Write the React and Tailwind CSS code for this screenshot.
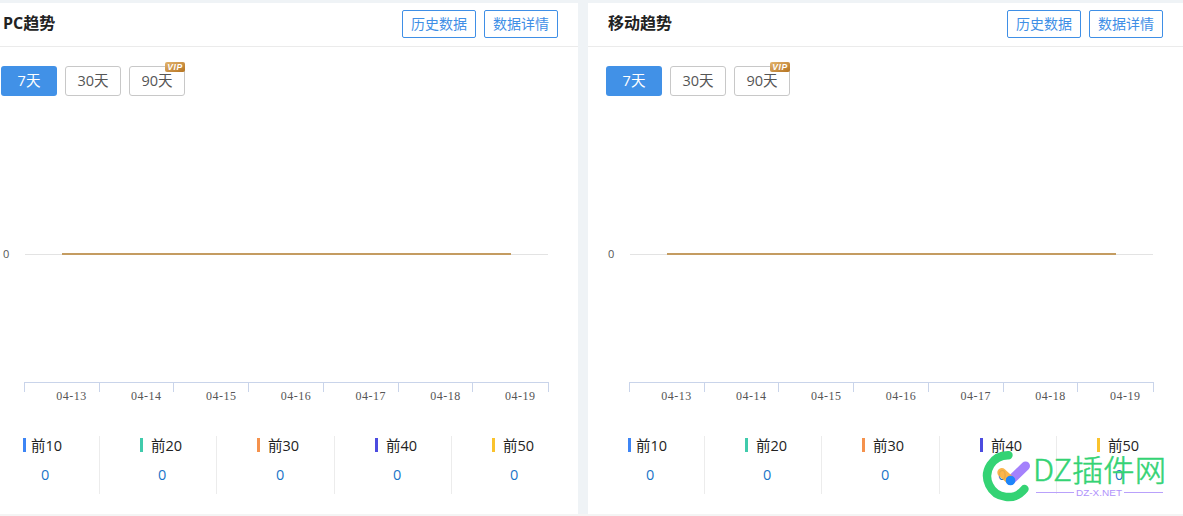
import React, { useState } from 'react';

const dates = ['04-13', '04-14', '04-15', '04-16', '04-17', '04-18', '04-19'];
const ticks = [24, 99, 173, 248, 323, 398, 472, 548];

const ranks = [
    { label: '前10', value: 0, col: 'w-[100px] pl-[23px] border-r', bar: 'bg-[#3d85f5] mr-[5px]', num: 'pl-[18px]' },
    { label: '前20', value: 0, col: 'w-[117px] pl-[40px] border-r', bar: 'bg-[#40cbac] mr-[8px]', num: 'pl-[18px]' },
    { label: '前30', value: 0, col: 'w-[118px] pl-[40px] border-r', bar: 'bg-[#f5924d] mr-[8px]', num: 'pl-[19px]' },
    { label: '前40', value: 0, col: 'w-[117px] pl-[40px] border-r', bar: 'bg-[#4c4ce0] mr-[8px]', num: 'pl-[18px]' },
    { label: '前50', value: 0, col: 'w-[117px] pl-[40px]', bar: 'bg-[#fac32d] mr-[8px]', num: 'pl-[18px]' },
];

const HeaderButton = ({ children }) => (
    <button className="w-[74px] h-7 rounded-[2px] border border-[#3f8fe6] text-sm leading-[26px] text-[#3f8fe6] whitespace-nowrap">
        {children}
    </button>
);

const DayTab = ({ label, active, vip, onClick }) => (
    <button
        className={
            active
                ? 'relative w-14 h-[30px] rounded-[3px] text-[14.5px] leading-[30px] bg-[#4191e7] text-white'
                : 'relative w-14 h-[30px] rounded-[3px] text-[14.5px] leading-[28px] border border-[#c8c8c8] text-[#555]'
        }
        onClick={onClick}
    >
        {label}
        {vip && (
            <span className="absolute -top-[5px] -right-px flex items-center justify-center w-5 h-[10px] rounded-[2px] bg-linear-to-br from-[#e3b46c] to-[#b5731c] font-['Liberation_Sans'] text-[8.5px] leading-[10px] font-bold italic tracking-[0.6px] text-white">
                VIP
            </span>
        )}
    </button>
);

const TrendChart = () => (
    <svg width="578" height="320" viewBox="0 96 578 320" className="block">
        <text x="3" y="258" fontSize="11" fill="#555" fontFamily="Open Sans, sans-serif">0</text>
        <path d="M25 254.5H548" stroke="#e3e3e3" />
        <path d="M62 254H511" stroke="#c49c61" strokeWidth="2" />
        <path d="M24 382.5H549" stroke="#c9d4ea" />
        {ticks.map((x) => (
            <path key={x} d={`M${x + 0.5} 382V392`} stroke="#c9d4ea" />
        ))}
        {dates.map((date, i) => (
            <text
                key={date}
                x={56.3 + i * 74.8}
                y="400"
                fontSize="12"
                letterSpacing="0.5"
                fill="#555"
                fontFamily="Liberation Serif, serif"
            >
                {date}
            </text>
        ))}
    </svg>
);

const TrendPanel = ({ title }) => {
    const [day, setDay] = useState('7天');

    return (
        <div className="w-[578px]">
            <div className="flex items-center h-[43px] pl-[3px] pr-5">
                <h2 className="flex-1 pb-[3px] text-base font-bold text-[#222]">{title}</h2>
                <div className="flex gap-2 pb-[2px]">
                    <HeaderButton>历史数据</HeaderButton>
                    <HeaderButton>数据详情</HeaderButton>
                </div>
            </div>
            <div className="flex gap-2 mt-5 pl-px">
                {['7天', '30天', '90天'].map((label) => (
                    <DayTab
                        key={label}
                        label={label}
                        active={day === label}
                        vip={label === '90天'}
                        onClick={() => setDay(label)}
                    />
                ))}
            </div>
            <TrendChart />
            <div className="flex mt-5">
                {ranks.map((rank) => (
                    <div key={rank.label} className={`h-[58px] border-[#ececec] ${rank.col}`}>
                        <div className="flex items-start h-5 text-[14.5px] leading-5 text-[#222]">
                            <span className={`w-[3px] h-[14px] mt-[2px] ${rank.bar}`}></span>
                            <span className="whitespace-nowrap">{rank.label}</span>
                        </div>
                        <div className={`mt-[9px] text-[14.5px] leading-5 text-[#1b75c8] ${rank.num}`}>{rank.value}</div>
                    </div>
                ))}
            </div>
        </div>
    );
};

const Watermark = () => (
    <svg width="190" height="60" viewBox="980 446 190 60" className="absolute left-[980px] top-[446px]">
        <g fill="none" strokeLinecap="round">
            <path d="M1008.5 455.2A20.9 20.9 0 1 0 1024.5 489" stroke="#34d374" strokeWidth="8.4" />
            <path d="M1010.5 480.5L1025.5 466" stroke="#a481fc" strokeWidth="9" />
            <path d="M1001.8 472.5L1010 480" stroke="#fbae38" strokeOpacity="0.9" strokeWidth="9" />
        </g>
        <circle cx="1010.5" cy="480.5" r="4.8" fill="#1c85fa" />
        <text x="1033" y="481" fontSize="29.5" fontWeight="300" textLength="133" lengthAdjust="spacingAndGlyphs" fill="#34d374" stroke="#34d374" strokeWidth="0.5" fontFamily="Noto Sans CJK SC, sans-serif">
            DZ插件网
        </text>
        <path d="M1036 492.5H1074M1124 492.5H1163" stroke="#b9a1fb" />
        <text x="1076" y="496" fontSize="9.5" textLength="46" lengthAdjust="spacingAndGlyphs" fill="#b092fb" fontFamily="Liberation Sans, sans-serif">
            DZ-X.NET
        </text>
    </svg>
);

const App = () => {
    return (
        <div className="relative w-[1183px] h-[516px] overflow-hidden bg-[#eff3f6] pt-[3px] font-['Open_Sans','Noto_Sans_CJK_SC',sans-serif]">
            <div className="flex gap-[10px] h-[511px]">
                <div className="w-[578px] bg-white bg-[linear-gradient(#ebebeb,#ebebeb)] bg-no-repeat bg-[length:100%_1px] bg-[position:0_43px]">
                    <TrendPanel title="PC趋势" />
                </div>
                <div className="w-[595px] pl-[17px] bg-white bg-[linear-gradient(#ebebeb,#ebebeb)] bg-no-repeat bg-[length:100%_1px] bg-[position:0_43px]">
                    <TrendPanel title="移动趋势" />
                </div>
            </div>
            <div className="h-[2px] bg-[#f4f4f4]"></div>
            <Watermark />
        </div>
    );
};

export default App;
